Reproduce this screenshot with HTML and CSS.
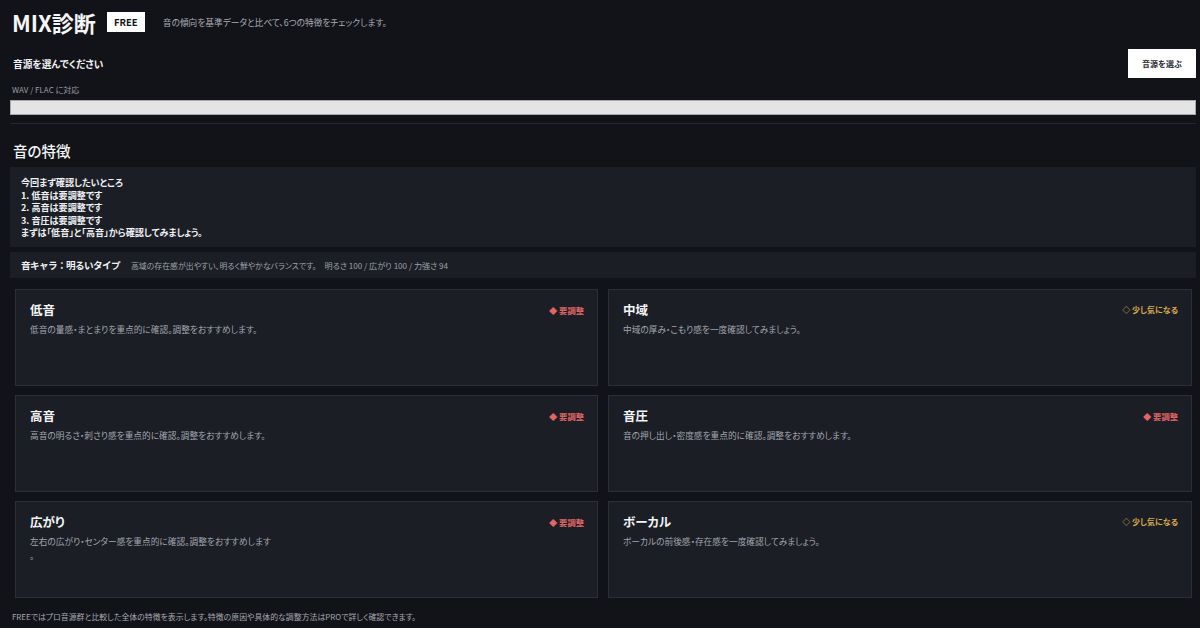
FILE: index.html
```html
<!DOCTYPE html>
<html lang="ja">
<head>
<meta charset="utf-8">
<title>MIX診断</title>
<link rel="stylesheet" href="styles.css">
</head>
<body>
<div class="page">
  <header class="head">
    <h1 class="title">MIX診断</h1>
    <span class="badge-free">FREE</span>
    <p class="lead">音の傾向を基準データと比べて、6つの特徴をチェックします。</p>
  </header>

  <section class="upload">
    <div class="upload-row">
      <div class="upload-label">音源を選んでください</div>
      <button class="pick">音源を選ぶ</button>
    </div>
    <div class="formats">WAV / FLAC に対応</div>
    <div class="bar"></div>
  </section>

  <hr class="divider">

  <h2 class="section-title">音の特徴</h2>

  <div class="panel priority">
    <p>今回まず確認したいところ</p>
    <p>1. 低音は要調整です</p>
    <p>2. 高音は要調整です</p>
    <p>3. 音圧は要調整です</p>
    <p>まずは「低音」と「高音」から確認してみましょう。</p>
  </div>

  <div class="panel chara">
    <span class="chara-name">音キャラ：明るいタイプ</span>
    <span class="chara-desc">高域の存在感が出やすい、明るく鮮やかなバランスです。</span>
    <span class="chara-stats">明るさ 100 / 広がり 100 / 力強さ 94</span>
  </div>

  <div class="cards">
    <div class="card">
      <div class="card-head"><h3>低音</h3><span class="status bad">◆ 要調整</span></div>
      <p class="desc">低音の量感・まとまりを重点的に確認。調整をおすすめします。</p>
    </div>
    <div class="card">
      <div class="card-head"><h3>中域</h3><span class="status warn">◇ 少し気になる</span></div>
      <p class="desc">中域の厚み・こもり感を一度確認してみましょう。</p>
    </div>
    <div class="card">
      <div class="card-head"><h3>高音</h3><span class="status bad">◆ 要調整</span></div>
      <p class="desc">高音の明るさ・刺さり感を重点的に確認。調整をおすすめします。</p>
    </div>
    <div class="card">
      <div class="card-head"><h3>音圧</h3><span class="status bad">◆ 要調整</span></div>
      <p class="desc">音の押し出し・密度感を重点的に確認。調整をおすすめします。</p>
    </div>
    <div class="card">
      <div class="card-head"><h3>広がり</h3><span class="status bad">◆ 要調整</span></div>
      <p class="desc">左右の広がり・センター感を重点的に確認。調整をおすすめします<br>。</p>
    </div>
    <div class="card">
      <div class="card-head"><h3>ボーカル</h3><span class="status warn">◇ 少し気になる</span></div>
      <p class="desc">ボーカルの前後感・存在感を一度確認してみましょう。</p>
    </div>
  </div>

  <p class="footnote">FREEではプロ音源群と比較した全体の特徴を表示します。特徴の原因や具体的な調整方法はPROで詳しく確認できます。</p>
</div>
</body>
</html>
```

FILE: styles.css
```css
* { box-sizing: border-box; }
html, body {
  margin: 0;
  background: #121318;
  color: #e8e9ec;
  font-family: "Noto Sans CJK JP", "Noto Sans", sans-serif;
  font-feature-settings: "palt";
}
.page {
  width: 1186px;
  margin-left: 10px;
  padding-top: 8px;
}
p, h1, h2, h3 { margin: 0; }

.head {
  display: flex;
  align-items: center;
  height: 28px;
}
.title {
  font-size: 22px;
  font-weight: 700;
  line-height: 28px;
  margin-left: 2px;
  color: #f4f5f7;
}
.badge-free {
  margin-left: 11px;
  background: #ffffff;
  color: #15161a;
  font-size: 9.5px;
  font-weight: 700;
  height: 20px;
  line-height: 20px;
  width: 38px;
  text-align: center;
}
.lead {
  margin-left: 18px;
  font-size: 8.7px;
  color: #a9acb3;
  padding-top: 1px;
}

.upload { margin-top: 13px; }
.upload-row {
  display: flex;
  align-items: center;
  justify-content: space-between;
}
.upload-label {
  font-size: 9.7px;
  font-weight: 700;
  color: #f1f2f4;
  padding-left: 3px;
}
.pick {
  width: 68px;
  height: 29px;
  background: #ffffff;
  border: none;
  font-family: inherit;
  font-size: 8px;
  font-weight: 700;
  color: #2a2c31;
  padding: 0;
}
.formats {
  margin-top: 6px;
  font-size: 8px;
  color: #9a9da5;
  padding-left: 2px;
  line-height: 12px;
}
.bar {
  margin-top: 4px;
  height: 15px;
  background: #e4e4e4;
  border: 1px solid #a8a8a8;
}
.divider {
  margin: 8px 0 0;
  border: none;
  height: 1px;
  background: #26282e;
}
.section-title {
  margin-top: 16px;
  font-size: 14.5px;
  font-weight: 500;
  color: #f2f3f5;
  padding-left: 3px;
  line-height: 22px;
}
.panel {
  background: #1b1e25;
}
.priority {
  margin-top: 5px;
  padding: 9px 11px 8px;
  height: 80px;
}
.priority p {
  font-size: 9.1px;
  font-weight: 700;
  color: #eef0f2;
  line-height: 12.5px;
}
.chara {
  margin-top: 5px;
  height: 26px;
  display: flex;
  align-items: center;
  padding-left: 11px;
}
.chara-name {
  font-size: 9.6px;
  font-weight: 700;
  color: #f0f1f3;
  font-feature-settings: normal;
  letter-spacing: -0.6px;
}
.chara-desc {
  margin-left: 11px;
  font-size: 7.9px;
  color: #9ea1a9;
}
.chara-stats {
  margin-left: 8px;
  font-size: 8.1px;
  color: #9ea1a9;
}

.cards {
  margin-top: 11px;
  padding: 0 4px 0 5px;
  display: grid;
  grid-template-columns: 583px 584px;
  column-gap: 10px;
  row-gap: 9px;
}
.card {
  height: 97px;
  background: #1b1e25;
  border: 1px solid #2c2f37;
  padding: 11px 13px 0 14px;
}
.card-head {
  display: flex;
  justify-content: space-between;
  align-items: center;
  height: 17px;
}
.card h3 {
  font-size: 12.5px;
  font-weight: 700;
  color: #f3f4f6;
}
.status {
  font-size: 8.3px;
  font-weight: 700;
}
.status.bad { color: #e06666; }
.status.warn { color: #d4aa4e; font-size: 8px; }
.desc {
  margin-top: 5px;
  font-size: 8.7px;
  color: #a2a5ad;
  line-height: 14px;
}
.footnote {
  margin-top: 13px;
  font-size: 7.9px;
  color: #a5a8b0;
  padding-left: 2px;
}
```
